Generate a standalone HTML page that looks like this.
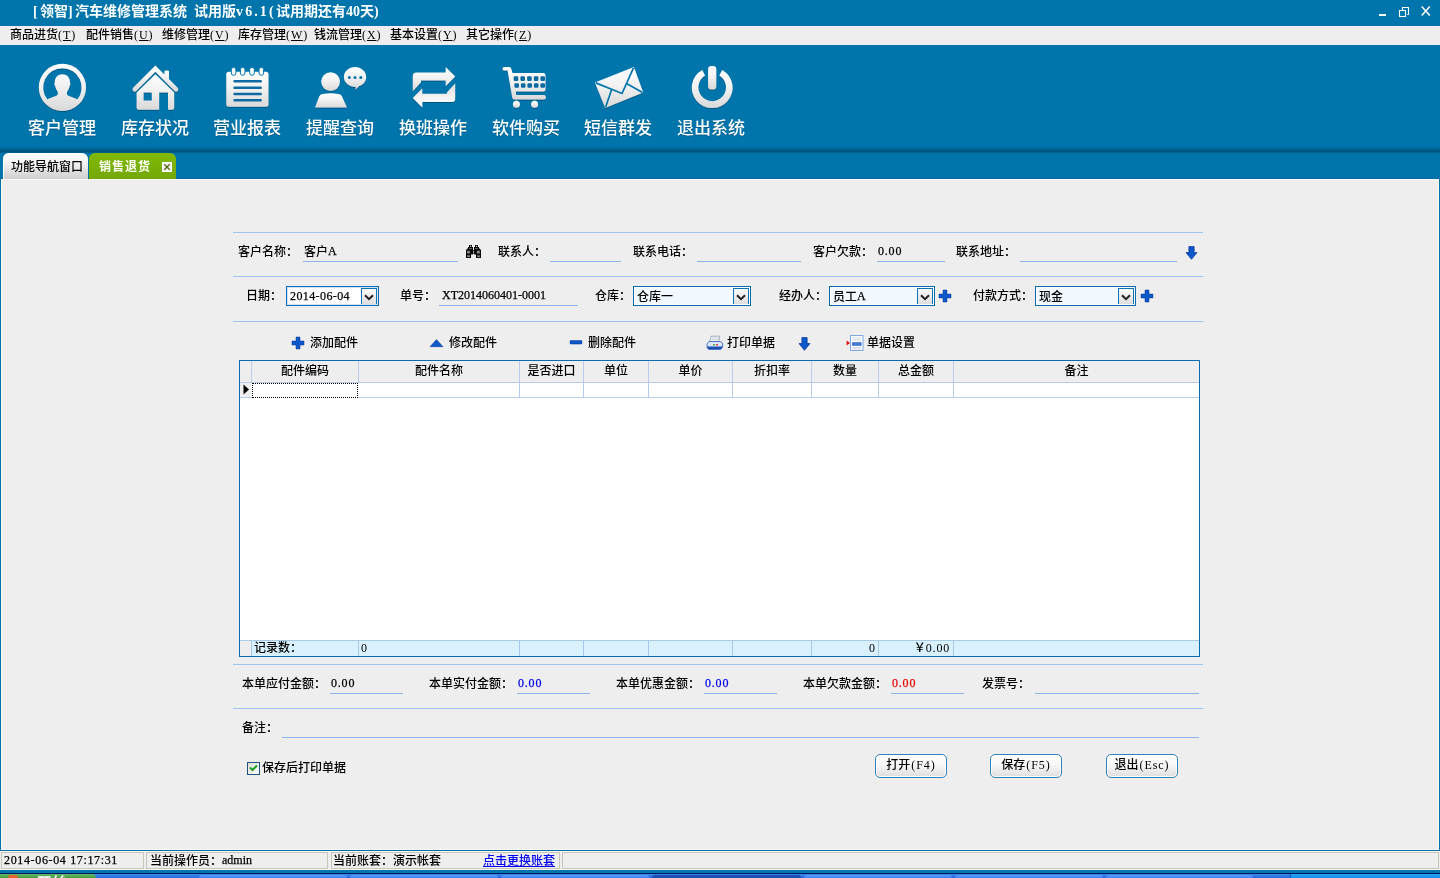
<!DOCTYPE html>
<html lang="zh-CN">
<head>
<meta charset="utf-8">
<title>[领智]汽车维修管理系统</title>
<style>
*{box-sizing:border-box;margin:0;padding:0}
html,body{width:1440px;height:878px;overflow:hidden;background:#eeeeee}
body{position:relative;font-family:"Liberation Serif","Noto Sans CJK SC",sans-serif;font-size:12px;line-height:14px;color:#000;font-weight:500}
#all{position:absolute;left:0;top:0;width:1440px;height:878px;will-change:transform}
.abs{position:absolute}
.t{position:absolute;white-space:nowrap;height:14px;line-height:14px}
#title{left:0;top:0;width:1440px;height:26px;background:#0075ab}
#title .cap{left:33px;top:4px;color:#fff;font-weight:bold;font-size:14px;line-height:16px;height:16px}
#title .b{letter-spacing:2.340px}#title .v{letter-spacing:2.100px}
#menu{left:0;top:26px;width:1440px;height:19px;background:#eeeeee}
#menu .t{top:2px}
#menu .mp{letter-spacing:.9px}
#menu u{text-decoration-thickness:1px;text-underline-offset:1px}
#tool{left:0;top:45px;width:1440px;height:134px;background:#0075ab}
#tool .sh{left:0;top:101px;width:1440px;height:7px;background:linear-gradient(#0075ab 0%,#006596 40%,#00547f 75%,#004f79 88%,#0075ab 100%)}
.tb{position:absolute;top:18px;width:92px;height:80px;text-align:center}
.tb svg{position:absolute;left:21px;top:0;width:50px;height:50px;overflow:visible}
.tb span{position:absolute;left:0;top:54px;font-weight:500;width:92px;text-align:center;color:#fff;font-family:"Liberation Sans","Noto Sans CJK SC",sans-serif;font-size:17px;line-height:24px;text-shadow:0 1px 0 rgba(0,50,80,.4)}
#tool .dk{left:0;top:133px;width:1440px;height:1px;background:#0069a4}
#tab1{left:3px;top:108px;width:85px;box-shadow:inset 1px 0 #fff;height:26px;border-radius:6px 6px 0 0;background:linear-gradient(#ffffff 0%,#f4f4f4 35%,#cfcfcf 100%)}
#tab1 .t{left:8px;top:7px}
#tab2{left:89px;top:108px;width:87px;height:26px;border-radius:6px 6px 0 0;background:linear-gradient(#80b905 0%,#74a807 100%)}
#tab2 .t{left:10px;top:7px;color:#fff;font-weight:bold;letter-spacing:1px}
#tab2 .x{left:73px;top:9px;width:10px;height:10px;background:#f2f2f2;border:1px solid #fff}
#main{left:0;top:179px;width:1440px;height:672px;background:#eeeeee;border:1px solid #0071a9;border-top:0;box-shadow:inset 1px 0 #fdf7f3,inset -1px 0 #fdf7f3,inset 0 1px #fdf7f3,inset 0 -1px #fdf7f3}
.hl{position:absolute;height:1px;background:#9fc3ee}
.ul{position:absolute;height:1px;background:#8db4ea}
.n{position:relative;top:-1px;-webkit-text-stroke:.25px currentColor}
.n0{letter-spacing:.8px}
.blue{color:#0000ee}
.red{color:#ee0000}
.sel{position:absolute;height:20px;border:1px solid #0a6cb0;background:#fff;box-shadow:inset 0 0 0 1px #cfe4f6}
.sel.tint{background:#f1f9ff;box-shadow:inset 0 0 0 1px #fff}
.sel .t{left:3px;top:3px}
.sel .dd{position:absolute;right:1px;top:1px;width:16px;height:16px;background:linear-gradient(#fafafa,#dedede);border:1px solid #0a74b5;border-bottom:0}
.sel .dd svg{position:absolute;left:2px;top:5px}
.ic{position:absolute}
#grid{left:239px;top:360px;width:961px;height:297px;border:1px solid #0a6cb0;background:#fff}
#grid .hd{left:0;top:0;width:959px;height:22px;background:#eeeeee;border-bottom:1px solid #b7cdf0}
#grid .hd .c{position:absolute;top:0;height:21px;border-left:1px solid #b7cdf0;text-align:center;line-height:21px}
#grid .row{left:0;top:22px;width:959px;height:15px;background:#fff;border-bottom:1px solid #b7cdf0}
#grid .row .c{position:absolute;top:0;height:14px;border-left:1px solid #b7cdf0}
#grid .ft{left:0;top:279px;width:959px;height:16px;background:#d9f1fd;border-top:1px solid #a9cbe8}
#grid .ft .c{position:absolute;top:0;height:15px;border-left:1px solid #a9c6ee;line-height:15px}
.btn{position:absolute;top:754px;width:72px;height:24px;border:1px solid #2f82bb;border-radius:5px;background:linear-gradient(#ffffff 0%,#f7f7f7 45%,#dedede 100%);text-align:center;line-height:21px;box-shadow:inset 0 0 0 1px #fff}
.btn span{letter-spacing:.9px;margin-left:1px}
#status{left:0;top:851px;width:1440px;height:19px;background:#eeeeee;box-shadow:inset 0 1px #fdf7f3,inset 0 -1px #fdf7f3}
#status .p{position:absolute;top:1px;height:17px;border:1px solid #c9c5b8}
#status .t{top:3px}
#blueband{left:0;top:870px;width:1440px;height:4px;background:#0075ab;border-bottom:1px solid #00185c}
.tk{position:absolute;top:1px;height:3px;background:linear-gradient(#5a9cf6,#3c82f0);border-radius:3px 3px 0 0}
.tk.on{background:#1e50b4}
#taskbar{left:0;top:874px;width:1440px;height:4px;background:linear-gradient(#3c8cf0,#2466dc);overflow:hidden}
</style>
</head>
<body>
<div id="all">
<div id="title" class="abs">
  <div class="t cap"><span class="b">[</span>领智<span class="b">]</span>汽车维修管理系统&nbsp; 试用版<span class="v">v6.1</span><span class="b">(</span>试用期还有40天<span class="b">)</span></div>
  <svg class="abs" style="left:1370px;top:4px" width="70" height="18" viewBox="0 0 70 18">
    <rect x="9" y="10" width="7" height="2" fill="#fff"/>
    <rect x="29.500" y="6.500" width="6" height="6" fill="none" stroke="#fff" stroke-width="1.100"/>
    <path d="M32.500 6.500V3.500H38.500V10.500H37.300" fill="none" stroke="#fff" stroke-width="1.100"/>
    <path d="M51.700 2.600L59.800 11.600M59.800 2.600L51.700 11.600" stroke="#fff" stroke-width="1.500" fill="none"/>
  </svg>
</div>
<div id="menu" class="abs">
  <div class="t" style="left:10px">商品进货<span class="mp">(<u>T</u>)</span></div>
  <div class="t" style="left:86px">配件销售<span class="mp">(<u>U</u>)</span></div>
  <div class="t" style="left:162px">维修管理<span class="mp">(<u>V</u>)</span></div>
  <div class="t" style="left:238px">库存管理<span class="mp">(<u>W</u>)</span></div>
  <div class="t" style="left:314px">钱流管理<span class="mp">(<u>X</u>)</span></div>
  <div class="t" style="left:390px">基本设置<span class="mp">(<u>Y</u>)</span></div>
  <div class="t" style="left:466px">其它操作<span class="mp">(<u>Z</u>)</span></div>
</div>
<div id="tool" class="abs">
  <div class="sh abs"></div>
  <div class="dk abs"></div>
<!--TB0-->
  <svg width="0" height="0" style="position:absolute"><defs>
    <linearGradient id="g" x1="0" y1="0" x2="0" y2="1"><stop offset="0" stop-color="#ffffff"/><stop offset=".45" stop-color="#f2f2f2"/><stop offset="1" stop-color="#d9d9d9"/></linearGradient>
    <filter id="ds" x="-10%" y="-10%" width="120%" height="130%"><feDropShadow dx="0" dy="1" stdDeviation=".6" flood-color="#003a5c" flood-opacity=".55"/></filter>
  </defs></svg>
  <div class="tb" style="left:16px"><svg viewBox="0 0 50 50"><g filter="url(#ds)" fill="url(#g)">
    <path fill-rule="evenodd" d="M25.400 .8A23.600 23.600 0 1 0 25.400 48A23.600 23.600 0 1 0 25.400 .8ZM25.400 5.200A19.200 19.200 0 0 1 40.500 36.300C37.500 35 33 33.600 30.600 32.200C29.700 31.500 29.800 29.500 30.300 28.200C31.800 26.500 32.500 24.300 32.700 22.600C33.600 22.300 33.700 20.300 33 19.800C33.200 14.500 30 11.300 25.400 11.300C20.800 11.300 17.600 14.500 17.800 19.800C17.100 20.300 17.200 22.300 18.100 22.600C18.300 24.300 19 26.500 20.500 28.200C21 29.500 21.100 31.500 20.200 32.200C17.800 33.600 13.300 35 10.300 36.300A19.200 19.200 0 0 1 25.400 5.200Z"/>
  </g></svg><span>客户管理</span></div>
  <div class="tb" style="left:109px"><svg viewBox="0 0 50 50"><g filter="url(#ds)" fill="url(#g)">
    <path d="M25.400 2.500L34.400 11.500V8.600A1.200 1.200 0 0 1 35.600 7.400H37.800A1.200 1.200 0 0 1 39 8.600V16.100L47.700 24.800A2.230 2.230 0 0 1 44.550 27.950L25.400 8.800L6.250 27.950A2.230 2.230 0 0 1 3.100 24.800Z"/>
    <path fill-rule="evenodd" d="M25.400 11.200L44.200 29.500V44.700A2 2 0 0 1 42.200 46.700H38V29.500H29.200V46.700H8.600A2 2 0 0 1 6.600 44.700V29.500ZM13.600 29.500V37.600H21.800V29.500Z"/>
  </g></svg><span>库存状况</span></div>
  <div class="tb" style="left:201px"><svg viewBox="0 0 50 50"><g filter="url(#ds)">
    <rect x="4.300" y="8.800" width="42.200" height="35" rx="2.500" fill="url(#g)"/>
    <g fill="#fff" stroke="#0075ab" stroke-width="1"><rect x="9.300" y="4.300" width="4.600" height="8" rx="2.300"/><rect x="18.400" y="4.300" width="4.600" height="8" rx="2.300"/><rect x="27.700" y="4.300" width="4.600" height="8" rx="2.300"/><rect x="37" y="4.300" width="4.600" height="8" rx="2.300"/></g>
    <g fill="#0a6aa2"><rect x="11.400" y="17" width="28.500" height="2.600" rx="1"/><rect x="11.400" y="23.400" width="28.500" height="2.600" rx="1"/><rect x="11.400" y="29.700" width="28.500" height="2.600" rx="1"/><rect x="11.400" y="36" width="28.500" height="2.600" rx="1"/></g>
  </g></svg><span>营业报表</span></div>
  <div class="tb" style="left:294px"><svg viewBox="0 0 50 50"><g filter="url(#ds)" fill="url(#g)">
    <circle cx="15.600" cy="18.600" r="9.400"/>
    <path d="M0 44.500L4.200 33.500Q5 31.400 7.500 31Q15.600 29.600 23.700 31Q26.200 31.400 27 33.500L32 44.500Z"/>
    <path d="M40 3.900C46.200 3.900 51.200 8.300 51.200 13.900C51.200 18.200 48.300 21.700 44.200 23.100L40.600 26.800L40.800 23.900C34.200 23.900 28.900 19.400 28.900 13.900C28.900 8.300 33.900 3.900 40 3.900Z"/>
    </g><g fill="#0075ab"><circle cx="34.400" cy="14.500" r="1.500"/><circle cx="40" cy="14.500" r="1.500"/><circle cx="45.800" cy="14.500" r="1.500"/></g>
  </svg><span>提醒查询</span></div>
  <div class="tb" style="left:387px"><svg viewBox="0 0 50 50"><g filter="url(#ds)" fill="url(#g)" transform="translate(1 0)">
    <path id="swp" d="M3.800 28.200V13A3.500 3.500 0 0 1 7.300 9.500H36.700V3.900L46.200 13.500L36.700 23.200V17.600H12V19.200Z"/>
    <use href="#swp" transform="rotate(180 25 24.200)"/>
  </g></svg><span>换班操作</span></div>
  <div class="tb" style="left:480px"><svg viewBox="0 0 50 50"><g filter="url(#ds)" fill="url(#g)">
    <path d="M3.300 4A1.800 1.800 0 0 0 3.300 7.600H6.600L11.200 34.400A2.200 2.200 0 0 0 13.400 36.400H42.800A2.200 2.200 0 0 0 42.800 32H15.300L14.700 28.400H42.500A2 2 0 0 0 44.500 26.400V12.300A2.200 2.200 0 0 0 42.300 10.100H11.500L10.200 5.600A2.200 2.200 0 0 0 8.200 4Z"/>
    <circle cx="15.400" cy="41.200" r="3.500"/><circle cx="33.600" cy="41.200" r="3.500"/>
    </g><g fill="#0a6aa2">
    <rect x="12.700" y="13.300" width="4.600" height="4.600" rx="1.200"/><rect x="19.400" y="13.300" width="4.600" height="4.600" rx="1.200"/><rect x="26.100" y="13.300" width="4.600" height="4.600" rx="1.200"/><rect x="32.800" y="13.300" width="4.600" height="4.600" rx="1.200"/><rect x="39.400" y="13.300" width="4.600" height="4.600" rx="1.200"/>
    <rect x="13.400" y="20.200" width="4.600" height="4.600" rx="1.200"/><rect x="19.900" y="20.200" width="4.600" height="4.600" rx="1.200"/><rect x="26.400" y="20.200" width="4.600" height="4.600" rx="1.200"/><rect x="32.900" y="20.200" width="4.600" height="4.600" rx="1.200"/><rect x="39.400" y="20.200" width="4.600" height="4.600" rx="1.200"/>
    </g>
  </svg><span>软件购买</span></div>
  <div class="tb" style="left:572px"><svg viewBox="0 0 50 50"><g filter="url(#ds)" transform="translate(1 0)">
    <path d="M.9 19.500L39.900 3.900L49.300 29.500L11.200 45.100Z" fill="url(#g)"/>
    <path d="M1.800 19.900L28 30.500L39.500 4.800M11.600 44.300L17.600 26.500M48.500 29.400L32.500 20.600" fill="none" stroke="#0075ab" stroke-width="1.700"/>
  </g></svg><span>短信群发</span></div>
  <div class="tb" style="left:665px"><svg viewBox="0 0 50 50"><g filter="url(#ds)" fill="url(#g)">
    <path d="M15.200 7.600A20.400 20.400 0 1 0 35.200 7.600L32.300 13.200A13.800 13.800 0 1 1 18.100 13.200Z" transform="translate(1 -.7)"/>
    <rect x="22.100" y="3" width="8.200" height="23.400" rx="3.200"/>
  </g></svg><span>退出系统</span></div>
<!--TB1-->
  <div id="tab1" class="abs"><div class="t">功能导航窗口</div></div>
  <div id="tab2" class="abs"><div class="t">销售退货</div>
    <div class="x abs"><svg width="8" height="8" viewBox="0 0 8 8" style="position:absolute;left:0;top:0"><path d="M1.300 1.300L6.700 6.700M6.700 1.300L1.300 6.700" stroke="#4f6a12" stroke-width="1.300"/></svg></div>
  </div>
</div>
<div id="main" class="abs"></div>
<!--FORM0-->
<div class="hl" style="left:233px;top:232px;width:970px"></div>
<div class="hl" style="left:233px;top:276px;width:970px"></div>
<div class="hl" style="left:233px;top:321px;width:970px"></div>
<div class="t" style="left:238px;top:245px">客户名称：</div>
<div class="t" style="left:304px;top:245px">客户<span class="n">A</span></div>
<div class="ul" style="left:303px;top:261px;width:155px"></div>
<svg class="ic" style="left:466px;top:245px" width="15" height="13" viewBox="0 0 15 13"><g fill="#0a0a0a"><path d="M3 0H6V2H7V9.500H5V13H0V5L1 4L2 3V2H3Z"/><path d="M12 0H9V2H8V9.500H10V13H15V5L14 4L13 3V2H12Z"/><rect x="6.500" y="5" width="2" height="3.500"/></g><g fill="#8e8e8e"><rect x="1.200" y="5.800" width="2.600" height="2.700"/><rect x="1.200" y="10.300" width="2.600" height="1.800"/><rect x="11" y="5.800" width="2.800" height="2.700"/><rect x="11.200" y="10.300" width="2.600" height="1.800"/><rect x="3.300" y="3.200" width="2.400" height=".9"/><rect x="9.300" y="3.200" width="2.400" height=".9"/></g><g fill="#eee"><rect x="4" y=".8" width="1.200" height="1"/><rect x="10" y=".8" width="1.200" height="1"/><rect x="7.200" y="5.800" width=".7" height="2"/></g></svg>
<div class="t" style="left:498px;top:245px">联系人：</div>
<div class="ul" style="left:550px;top:261px;width:71px"></div>
<div class="t" style="left:633px;top:245px">联系电话：</div>
<div class="ul" style="left:697px;top:261px;width:104px"></div>
<div class="t" style="left:813px;top:245px">客户欠款：</div>
<div class="t" style="left:878px;top:245px"><span class="n n0">0.00</span></div>
<div class="ul" style="left:877px;top:261px;width:68px"></div>
<div class="t" style="left:956px;top:245px">联系地址：</div>
<div class="ul" style="left:1020px;top:261px;width:157px"></div>
<svg class="ic" style="left:1185px;top:246px" width="13" height="14" viewBox="0 0 13 14"><path d="M3.900 .6H9.100V6.600H12L6.500 13.300L1 6.600H3.900Z" fill="#0b58c8" stroke="#0b3a9c" stroke-width=".8"/></svg>

<div class="t" style="left:246px;top:289px">日期：</div>
<div class="sel" style="left:286px;top:286px;width:93px"><div class="t n" style="left:3px;letter-spacing:.4px;top:2px">2014-06-04</div><div class="dd"><svg width="10" height="7" viewBox="0 0 10 7"><path d="M1 1.200L5 5.200L9 1.200" fill="none" stroke="#222" stroke-width="2"/></svg></div></div>
<div class="t" style="left:400px;top:289px">单号：</div>
<div class="t" style="left:442px;top:289px"><span class="n">XT2014060401-0001</span></div>
<div class="ul" style="left:439px;top:305px;width:139px"></div>
<div class="t" style="left:595px;top:289px">仓库：</div>
<div class="sel tint" style="left:633px;top:286px;width:118px"><div class="t">仓库一</div><div class="dd"><svg width="10" height="7" viewBox="0 0 10 7"><path d="M1 1.200L5 5.200L9 1.200" fill="none" stroke="#222" stroke-width="2"/></svg></div></div>
<div class="t" style="left:779px;top:289px">经办人：</div>
<div class="sel tint" style="left:829px;top:286px;width:106px"><div class="t">员工<span class="n">A</span></div><div class="dd"><svg width="10" height="7" viewBox="0 0 10 7"><path d="M1 1.200L5 5.200L9 1.200" fill="none" stroke="#222" stroke-width="2"/></svg></div></div>
<svg class="ic" style="left:938px;top:289px" width="14" height="14" viewBox="0 0 14 14"><path d="M5 1H9V5H13V9H9V13H5V9H1V5H5Z" fill="#0b58c8" stroke="#0b3a9c" stroke-width=".5"/></svg>
<div class="t" style="left:973px;top:289px">付款方式：</div>
<div class="sel tint" style="left:1035px;top:286px;width:101px"><div class="t">现金</div><div class="dd"><svg width="10" height="7" viewBox="0 0 10 7"><path d="M1 1.200L5 5.200L9 1.200" fill="none" stroke="#222" stroke-width="2"/></svg></div></div>
<svg class="ic" style="left:1140px;top:289px" width="14" height="14" viewBox="0 0 14 14"><path d="M5 1H9V5H13V9H9V13H5V9H1V5H5Z" fill="#0b58c8" stroke="#0b3a9c" stroke-width=".5"/></svg>

<svg class="ic" style="left:291px;top:336px" width="14" height="14" viewBox="0 0 14 14"><path d="M5 1H9V5H13V9H9V13H5V9H1V5H5Z" fill="#0b58c8" stroke="#0b3a9c" stroke-width=".5"/></svg>
<div class="t" style="left:310px;top:336px">添加配件</div>
<svg class="ic" style="left:428px;top:337px" width="16" height="11" viewBox="0 0 16 11"><path d="M8.500 2.500L15 9.700H2Z" fill="#0b58c8" stroke="#0b3a9c" stroke-width=".5"/></svg>
<div class="t" style="left:449px;top:336px">修改配件</div>
<svg class="ic" style="left:568px;top:339px" width="15" height="6" viewBox="0 0 15 6"><rect x="2" y="1.500" width="12" height="3.500" rx=".8" fill="#0b58c8" stroke="#0b3a9c" stroke-width=".5"/></svg>
<div class="t" style="left:588px;top:336px">删除配件</div>
<svg class="ic" style="left:706px;top:335px" width="18" height="16" viewBox="0 0 18 16"><path d="M5.200 1.200H13.800L12.600 6.800H3.600Z" fill="#f4f4f4" stroke="#8c99ad" stroke-width=".8"/><path d="M6 3H12.500M5.600 4.600H12.200" stroke="#c4c9d2" stroke-width=".7"/><path d="M3.200 6.500H14.200L16.600 8.200V12L14.800 14.200H2.600L1 12.400V8.600Z" fill="#dbe7f7" stroke="#3a68b8" stroke-width=".9"/><path d="M1.200 11.600H16.400V12.200L14.800 14.400H2.600L1.200 12.600Z" fill="#1c4fb4"/><rect x="7" y="9.200" width="2" height="1.200" fill="#22a022"/><rect x="10" y="9.200" width="2" height="1.200" fill="#e02020"/></svg>
<div class="t" style="left:727px;top:336px">打印单据</div>
<svg class="ic" style="left:798px;top:337px" width="13" height="14" viewBox="0 0 13 14"><path d="M3.900 .6H9.100V6.600H12L6.500 13.300L1 6.600H3.900Z" fill="#0b58c8" stroke="#0b3a9c" stroke-width=".8"/></svg>
<svg class="ic" style="left:846px;top:335px" width="18" height="16" viewBox="0 0 18 16"><path d="M.6 5.500L4 8L.6 10.500Z" fill="#e01010"/><rect x="4.500" y=".5" width="12.500" height="15" fill="#fbfcfe" stroke="#7ea8e2" stroke-width="1"/><path d="M6.500 3H15M6.500 5H15M6.500 12.500H15M6.500 14H15" stroke="#c9ced6" stroke-width=".8"/><rect x="6.200" y="7.300" width="9.200" height="3.400" fill="#1a54c0"/><rect x="7.200" y="8.500" width="7.200" height="1" fill="#7fa6e8"/></svg>
<div class="t" style="left:867px;top:336px">单据设置</div>
<!--FORM1-->
<!--GRID0-->
<div id="grid" class="abs">
  <div class="hd abs">
    <div class="c" style="left:11px;width:107px">配件编码</div>
    <div class="c" style="left:118px;width:161px">配件名称</div>
    <div class="c" style="left:279px;width:64px">是否进口</div>
    <div class="c" style="left:343px;width:65px">单位</div>
    <div class="c" style="left:408px;width:84px">单价</div>
    <div class="c" style="left:492px;width:79px">折扣率</div>
    <div class="c" style="left:571px;width:67px">数量</div>
    <div class="c" style="left:638px;width:75px">总金额</div>
    <div class="c" style="left:713px;width:246px">备注</div>
  </div>
  <div class="row abs">
    <div class="abs" style="left:0;top:0;width:11px;height:14px;background:#eeeeee"></div>
    <svg class="abs" style="left:3px;top:1px" width="7" height="11" viewBox="0 0 7 11"><path d="M.5 .5L6 5.500L.5 10.500Z" fill="#000"/></svg>
    <div class="c" style="left:12px;width:106px;height:15px;border:1px dotted #000;background:#fff"></div>
    <div class="c" style="left:118px;width:161px;border-left:0"></div>
    <div class="c" style="left:279px;width:64px"></div>
    <div class="c" style="left:343px;width:65px"></div>
    <div class="c" style="left:408px;width:84px"></div>
    <div class="c" style="left:492px;width:79px"></div>
    <div class="c" style="left:571px;width:67px"></div>
    <div class="c" style="left:638px;width:75px"></div>
    <div class="c" style="left:713px;width:246px"></div>
  </div>
  <div class="ft abs">
    <div class="abs" style="left:0;top:0;width:11px;height:15px;background:#eeeeee"></div>
    <div class="c" style="left:11px;width:107px;padding-left:2px">记录数：</div>
    <div class="c" style="left:118px;width:161px;padding-left:2px">0</div>
    <div class="c" style="left:279px;width:64px"></div>
    <div class="c" style="left:343px;width:65px"></div>
    <div class="c" style="left:408px;width:84px"></div>
    <div class="c" style="left:492px;width:79px"></div>
    <div class="c" style="left:571px;width:67px;text-align:right;padding-right:3px">0</div>
    <div class="c" style="left:638px;width:75px;text-align:right;padding-right:3px">￥<span class="n0">0.00</span></div>
    <div class="c" style="left:713px;width:246px"></div>
  </div>
</div>
<!--GRID1-->
<!--BOTTOM0-->
<div class="hl" style="left:233px;top:664px;width:970px"></div>
<div class="t" style="left:242px;top:677px">本单应付金额：</div>
<div class="t" style="left:331px;top:677px"><span class="n n0">0.00</span></div>
<div class="ul" style="left:330px;top:693px;width:73px"></div>
<div class="t" style="left:429px;top:677px">本单实付金额：</div>
<div class="t blue" style="left:518px;top:677px"><span class="n n0">0.00</span></div>
<div class="ul" style="left:517px;top:693px;width:73px"></div>
<div class="t" style="left:616px;top:677px">本单优惠金额：</div>
<div class="t blue" style="left:705px;top:677px"><span class="n n0">0.00</span></div>
<div class="ul" style="left:704px;top:693px;width:73px"></div>
<div class="t" style="left:803px;top:677px">本单欠款金额：</div>
<div class="t red" style="left:892px;top:677px"><span class="n n0">0.00</span></div>
<div class="ul" style="left:891px;top:693px;width:73px"></div>
<div class="t" style="left:982px;top:677px">发票号：</div>
<div class="ul" style="left:1035px;top:693px;width:164px"></div>
<div class="hl" style="left:233px;top:708px;width:970px"></div>
<div class="t" style="left:242px;top:721px">备注：</div>
<div class="ul" style="left:282px;top:737px;width:917px"></div>
<div class="abs" style="left:247px;top:762px;width:13px;height:13px;border:1px solid #1c5180;background:linear-gradient(135deg,#dcdcd7,#fff)"><svg width="11" height="11" viewBox="0 0 11 11" style="position:absolute;left:0;top:0"><path d="M2 4.500L4.500 7L9 2.500" fill="none" stroke="#21a121" stroke-width="2"/></svg></div>
<div class="t" style="left:262px;top:761px">保存后打印单据</div>
<div class="btn" style="left:875px">打开<span>(F4)</span></div>
<div class="btn" style="left:990px">保存<span>(F5)</span></div>
<div class="btn" style="left:1106px">退出<span>(Esc)</span></div>
<!--BOTTOM1-->
<!--STATUS0-->
<div id="status" class="abs">
  <div class="p" style="left:1px;width:143px"></div>
  <div class="p" style="left:146px;width:182px"></div>
  <div class="p" style="left:331px;width:229px"></div>
  <div class="p" style="left:562px;width:877px"></div>
  <div class="t" style="left:4px"><span class="n" style="letter-spacing:.65px">2014-06-04 17:17:31</span></div>
  <div class="t" style="left:150px">当前操作员：<span class="n">admin</span></div>
  <div class="t" style="left:333px">当前账套：演示帐套</div>
  <div class="t" style="left:483px;color:#0000ee;text-decoration:underline">点击更换账套</div>
</div>
<div id="blueband" class="abs"></div>
<div id="taskbar" class="abs">
  <div class="abs" style="left:0;top:0;width:96px;height:4px;background:linear-gradient(#6cb86c,#3f9a45);border-radius:0 7px 0 0"></div>
  <div class="abs" style="left:8px;top:1px;width:10px;height:3px;background:#e8642c;border-radius:3px 3px 0 0"></div>
  <div class="abs" style="left:34px;top:0;color:#fff;font:italic bold 15px/17px 'Liberation Sans','Noto Sans CJK SC',sans-serif;letter-spacing:1px;white-space:nowrap">开始</div>
  <div class="tk" style="left:199px;width:148px"></div>
  <div class="tk" style="left:350px;width:148px"></div>
  <div class="tk" style="left:501px;width:148px"></div>
  <div class="tk on" style="left:652px;width:149px"></div>
  <div class="tk" style="left:804px;width:148px"></div>
  <div class="tk" style="left:955px;width:148px"></div>
  <div class="tk" style="left:1106px;width:147px"></div>
  <div class="abs" style="left:1290px;top:0;width:150px;height:4px;background:linear-gradient(#2aa0f4,#1290e8);border-left:1px solid #0c5fc0"></div>
</div>
<!--STATUS1-->
</div>
</body>
</html>
